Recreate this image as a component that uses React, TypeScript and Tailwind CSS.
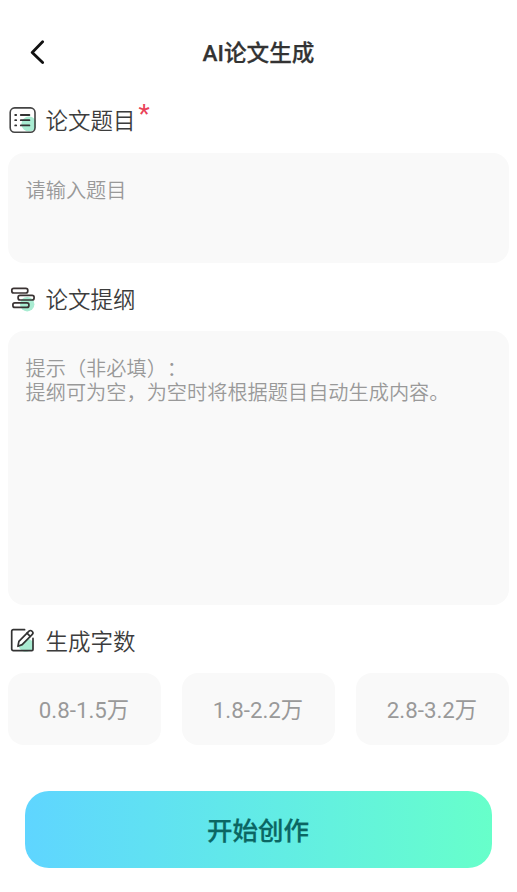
import { useState } from "react";
import type { ReactNode } from "react";
import clsx from "clsx";

const wordCounts = ["0.8-1.5万", "1.8-2.2万", "2.8-3.2万"];

function BackIcon() {
  return (
    <svg width="16" height="26" viewBox="0 0 16 26" fill="none">
      <path
        d="M12.6 1.8 2.2 12.4 12.6 22.6"
        stroke="#111"
        strokeWidth="2.8"
        strokeLinecap="round"
        strokeLinejoin="round"
      />
    </svg>
  );
}

function ListIcon() {
  return (
    <svg width="28" height="28" viewBox="0 0 28 28" fill="none">
      <circle cx="21" cy="18" r="7.6" fill="#a9ecd2" />
      <rect x="2.2" y="1.9" width="24.8" height="24.4" rx="4.5" stroke="#444" strokeWidth="1.6" />
      <path
        d="M12.8 9h8.6M12.8 14.2h8.6M12.8 19.4h8.6M7.2 9h1M7.2 14.2h1M7.2 19.4h1"
        stroke="#333"
        strokeWidth="1.8"
        strokeLinecap="round"
      />
    </svg>
  );
}

function OutlineIcon() {
  return (
    <svg width="28" height="28" viewBox="0 0 28 28" fill="none">
      <circle cx="19.2" cy="19.2" r="7.2" fill="#a9ecd2" />
      <g stroke="#3a3333" strokeWidth="1.7">
        <rect x="3.8" y="3.4" width="16" height="4.6" rx="2" />
        <rect x="10.1" y="10.4" width="16" height="4.6" rx="2" />
        <rect x="4.9" y="17.8" width="16" height="4.6" rx="2" />
      </g>
    </svg>
  );
}

function EditIcon() {
  return (
    <svg width="28" height="28" viewBox="0 0 28 28" fill="none">
      <path d="M25 14.6v9.2h-3.4a7.6 7.6 0 0 1-11.1-4.6L20 11.2Z" fill="#a9ecd2" />
      <g stroke="#333" strokeWidth="1.7" strokeLinecap="round" strokeLinejoin="round">
        <path d="M16.6 2.7H5.3a1.6 1.6 0 0 0-1.6 1.6V22a1.6 1.6 0 0 0 1.6 1.6h18.6a1.1 1.1 0 0 0 1.1-1.1V11.4" />
        <path d="m9.9 19.3 1-5L21 4.1a2 2 0 0 1 2.9 0l.4.4a2 2 0 0 1 0 2.8L14.2 17.6Z" />
        <path d="m19 6.2 3.2 3.2" />
      </g>
    </svg>
  );
}

function SectionTitle({ icon, label, required }: { icon: ReactNode; label: string; required?: boolean }) {
  return (
    <div className="flex h-7 items-center">
      {icon}
      <h2 className="ml-[9.5px] pt-0.5 text-[22.5px] leading-7 font-[350] whitespace-nowrap text-[#3c3c3c]">
        {label}
      </h2>
      {required && <span className="ml-[3px] -mt-[13px] text-[26px] leading-7 text-[#ea4359]">*</span>}
    </div>
  );
}

export default function App() {
  const [title, setTitle] = useState("");
  const [outline, setOutline] = useState("");
  const [count, setCount] = useState("");

  return (
    <div className="flex h-[892px] w-[517px] flex-col overflow-hidden bg-white px-2 font-['Roboto','Noto_Sans_CJK_SC',sans-serif] [text-spacing-trim:space-all]">
      {/* Header */}
      <header className="grid h-[106px] shrink-0 grid-cols-[1fr_auto_1fr] items-center">
        <button className="ml-[22px] w-4 justify-self-start" aria-label="返回">
          <BackIcon />
        </button>
        <h1 className="pt-px text-[22.6px] leading-8 font-medium text-[#333] [-webkit-text-stroke:0.25px_#333]">
          AI论文生成
        </h1>
      </header>

      {/* Title */}
      <SectionTitle icon={<ListIcon />} label="论文题目" required />
      <textarea
        value={title}
        onChange={(e) => setTitle(e.target.value)}
        placeholder="请输入题目"
        className="mt-[19px] block h-[110px] w-[501px] shrink-0 resize-none rounded-2xl bg-[#f9f9f9] px-[17.5px] pt-[26px] text-[20.2px] leading-6 font-[350] text-[#333] outline-none placeholder:text-[#999]"
      />

      {/* Outline */}
      <div className="mt-[22px]">
        <SectionTitle icon={<OutlineIcon />} label="论文提纲" />
      </div>
      <textarea
        value={outline}
        onChange={(e) => setOutline(e.target.value)}
        placeholder={"提示（非必填）：\n提纲可为空，为空时将根据题目自动生成内容。"}
        className="mt-[18px] block h-[274px] w-[501px] shrink-0 resize-none rounded-2xl bg-[#f9f9f9] px-[17.5px] pt-[26px] text-[20.2px] leading-6 font-[350] text-[#333] outline-none placeholder:text-[#999]"
      />

      {/* Word count */}
      <div className="mt-[22px]">
        <SectionTitle icon={<EditIcon />} label="生成字数" />
      </div>
      <div className="mt-[18px] grid w-[501px] grid-cols-3 gap-[21px]">
        {wordCounts.map((item) => (
          <button
            key={item}
            onClick={() => setCount(item)}
            className={clsx(
              "h-[72px] rounded-2xl bg-[#f9f9f9] pt-[3px] pr-px text-[22.3px]",
              count === item ? "text-[#0b6b68]" : "text-[#999]"
            )}
          >
            {item}
          </button>
        ))}
      </div>

      <button className="mt-[46px] ml-[17px] h-[77px] w-[467px] shrink-0 rounded-3xl bg-linear-to-r from-[#5fd5ff] to-[#67ffca] pt-[3px] pr-px text-[25.5px] font-medium text-[#0b6663] [-webkit-text-stroke:0.25px_#0b6663]">
        开始创作
      </button>
    </div>
  );
}
